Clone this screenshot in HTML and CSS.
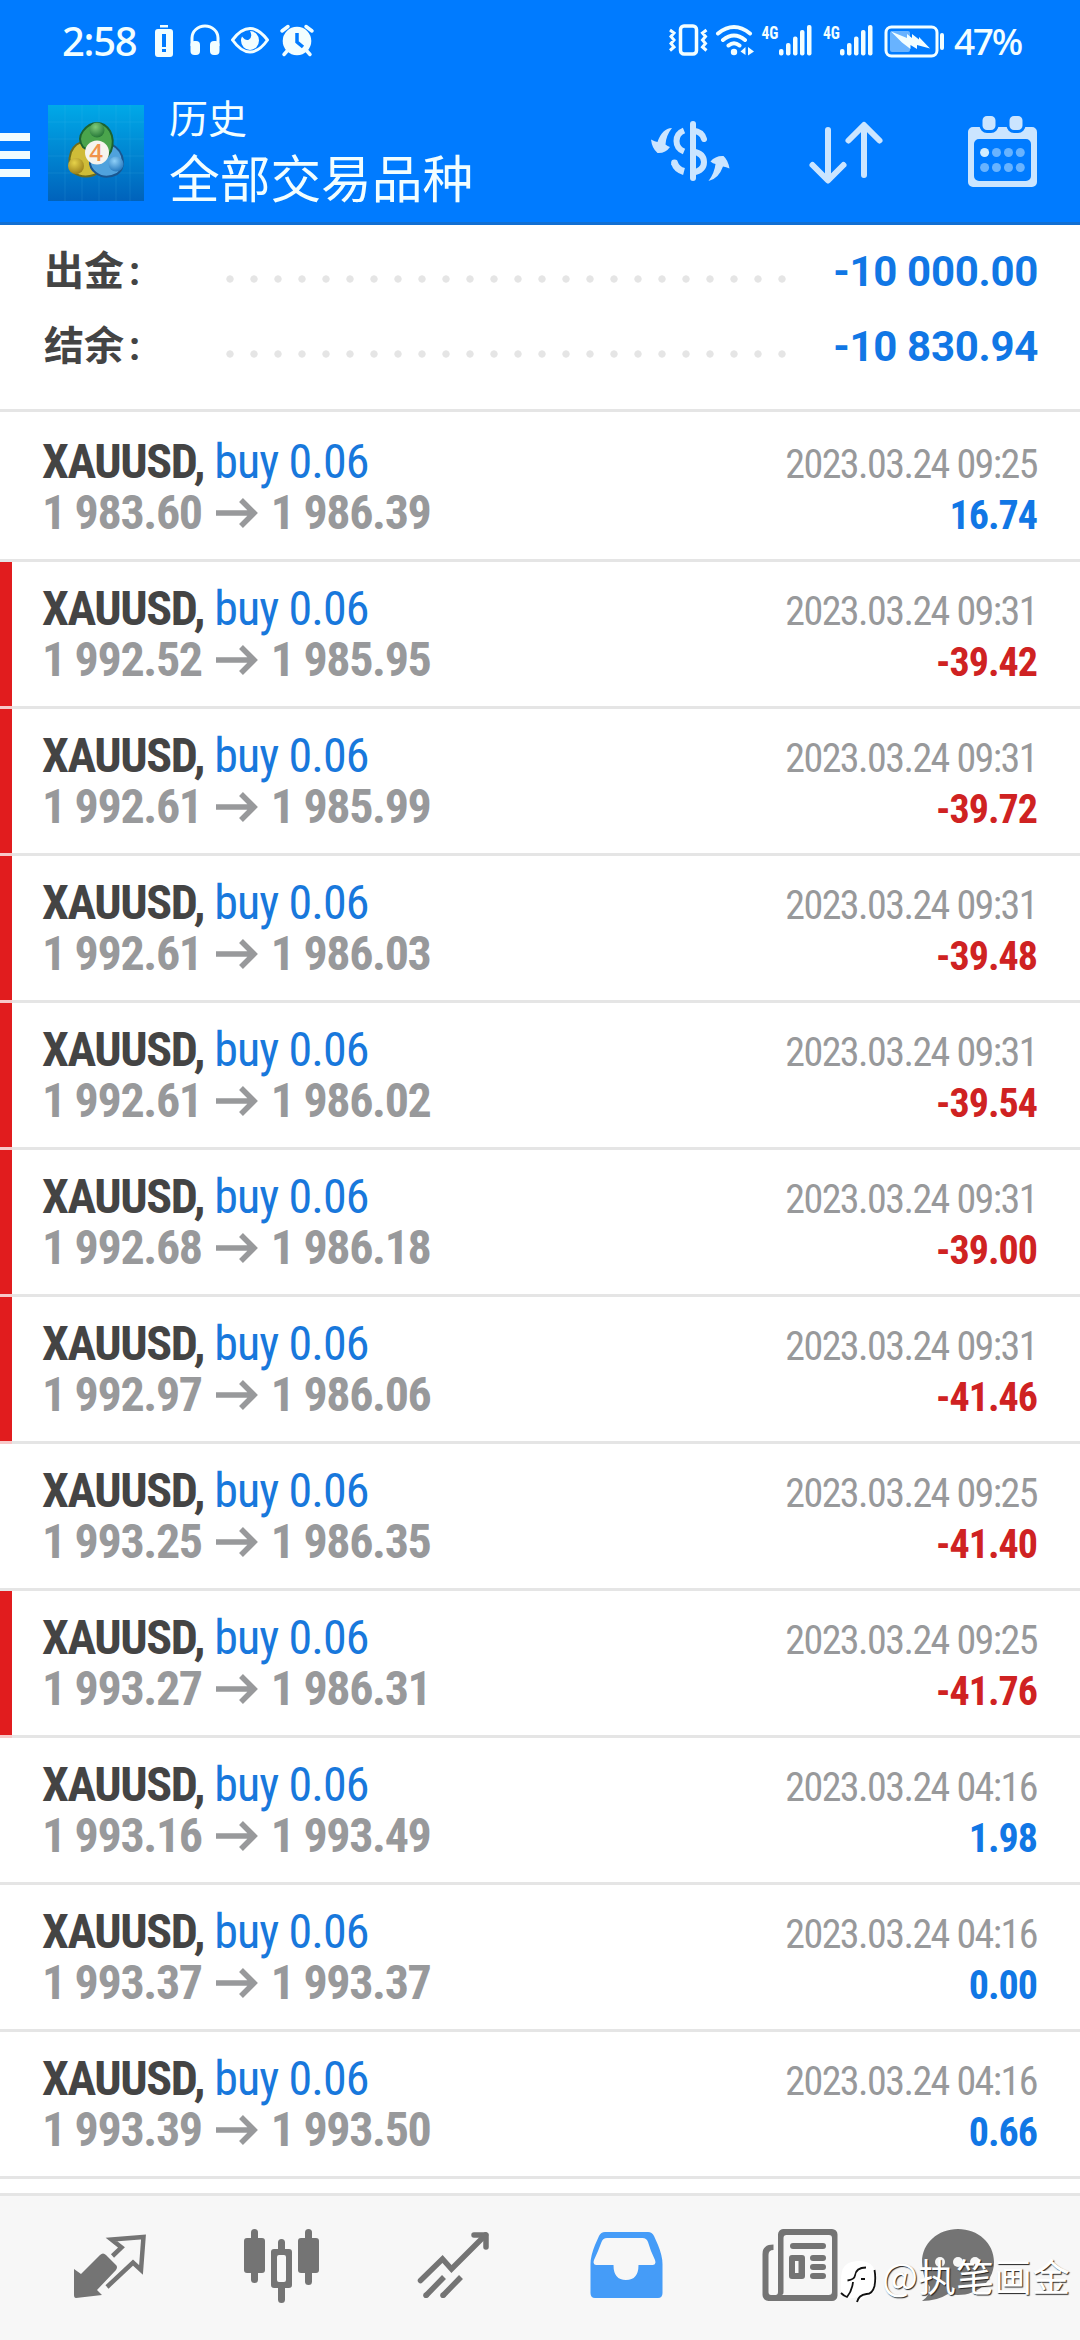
FILE: index.html
```
<!DOCTYPE html>
<html lang="zh-CN">
<head>
<meta charset="utf-8">
<title>历史</title>
<link rel="stylesheet" href="styles.css">
</head>
<body>
<header class="top">
  <div class="status">
    <span class="clock">2:58</span>
    <svg class="status-left" width="165" height="40" viewBox="152 20 165 40">
      <g fill="#f2feff">
        <path d="M160 25h8v2.500h-8zM158 29h12a3 3 0 0 1 3 3v22a3 3 0 0 1-3 3h-12a3 3 0 0 1-3-3V32a3 3 0 0 1 3-3z"/>
        <rect x="162" y="34" width="4" height="13" fill="#007bff"/><rect x="162" y="49" width="4" height="3" fill="#007bff"/>
        <path d="M192 46V38a13 12 0 0 1 26 0v8" fill="none" stroke="#f2feff" stroke-width="3"/>
        <rect x="190.500" y="41" width="9.500" height="14" rx="4"/><rect x="210" y="41" width="9.500" height="14" rx="4"/>
        <path d="M232.500 40Q241 28.500 250 28.500T267.500 40Q259 52 250 52T232.500 40z" fill="none" stroke="#f2feff" stroke-width="3" stroke-linejoin="round"/>
        <path d="M250 31a9 9.500 0 1 1-9 9.500q0-2 1-4 4 5 7 3 4-3 1-8.500z"/>
        <circle cx="297" cy="41" r="14.300"/>
        <path d="M282 31l6-4.500M312 31l-6-4.500M288 50l-4 4.500M306 50l4 4.500" fill="none" stroke="#f2feff" stroke-width="3.500" stroke-linecap="round"/>
        <path d="M297 33v9l6 5" fill="none" stroke="#007bff" stroke-width="3.500"/>
      </g>
    </svg>
    <svg class="status-right" width="286" height="40" viewBox="664 20 286 40">
      <g fill="none" stroke="#f2feff" stroke-width="3.500">
        <rect x="680.500" y="26" width="16" height="28" rx="3.500"/>
        <path d="M670 30l4 3-3 3.500 3 3.500-3 3.500 3 3.500-4 3.500M706.500 30l-4 3 3 3.500-3 3.500 3 3.500-3 3.500 4 3.500" stroke-width="3"/>
        <path d="M718 33.500q16-13 32 0M723 40q11-9 22 0M728.500 45.500q5.500-4.500 11 0" stroke-width="4" stroke-linecap="round"/>
        <rect x="886" y="27" width="51" height="29" rx="5.500" stroke-width="3"/>
      </g>
      <g fill="#f2feff">
        <circle cx="734" cy="52" r="3.200"/>
        <path d="M740.500 51.500l5-4.500v8zM748 47l6 4.500-6 4z"/>
        <rect x="779" y="49" width="4.500" height="6.500" rx="2"/><rect x="786" y="43" width="4.500" height="12.500" rx="2"/><rect x="793" y="36.500" width="4.500" height="19" rx="2"/><rect x="800" y="30" width="4.500" height="25.500" rx="2"/><rect x="807" y="25" width="4.500" height="30.500" rx="2"/>
        <rect x="840" y="49" width="4.500" height="6.500" rx="2"/><rect x="847" y="43" width="4.500" height="12.500" rx="2"/><rect x="854" y="36.500" width="4.500" height="19" rx="2"/><rect x="861" y="30" width="4.500" height="25.500" rx="2"/><rect x="868" y="25" width="4.500" height="30.500" rx="2"/>
        <rect x="890" y="31" width="20" height="21" rx="2" fill="#68b3ff"/>
        <path d="M891 31.500l16 6.500v-4l5 4v-4l7 5.500v-2.500L930 48.500 917 45v4l-6.500-4v4L902 42.500z"/>
        <rect x="940" y="33" width="4" height="17" rx="2"/>
      </g>
      <text class="net" x="761.500" y="38.500" textLength="17" lengthAdjust="spacingAndGlyphs">4G</text>
      <text class="net" x="823" y="38.500" textLength="17" lengthAdjust="spacingAndGlyphs">4G</text>
    </svg>
    <span class="percent">47%</span>
  </div>
  <div class="appbar">
    <svg class="menu" width="30" height="44" viewBox="0 133 30 44"><path d="M0 133h30v8H0zM0 151h30v8H0zM0 169h30v8H0z" fill="#effcff"/></svg>
    <svg class="logo" width="96" height="96" viewBox="0 0 96 96">
      <defs>
        <linearGradient id="bg" x1="0" y1="0" x2="0" y2="1"><stop offset="0" stop-color="#00a9e8"/><stop offset=".5" stop-color="#0086d2"/><stop offset="1" stop-color="#0062bb"/></linearGradient>
        <radialGradient id="gr" cx=".4" cy=".3" r=".8"><stop offset="0" stop-color="#7fcb7a"/><stop offset="1" stop-color="#1a6c2f"/></radialGradient>
        <radialGradient id="ye" cx=".4" cy=".3" r=".8"><stop offset="0" stop-color="#e6d24a"/><stop offset="1" stop-color="#937714"/></radialGradient>
        <radialGradient id="bl" cx=".4" cy=".3" r=".8"><stop offset="0" stop-color="#8fd0f8"/><stop offset="1" stop-color="#1a6fb8"/></radialGradient>
      </defs>
      <rect width="96" height="96" fill="url(#bg)"/>
      <path d="M0 17h96M0 34h96M0 51h96M0 68h96M17 0v96M34 0v96M51 0v96M68 0v96M82 0v96" stroke="#5cc4ef" stroke-opacity=".14"/>
      <path d="M42 38q-13-4-19 9-4 12 2 20 9 7 21 3l8-5z" fill="#cfbc38" stroke="#6c6c1d" stroke-width="2"/>
      <path d="M58 38q12 2 16 13 3 13-5 18-12 6-21-1-7-5-6-13z" fill="#4fa2dd" stroke="#1a5690" stroke-width="2"/>
      <path d="M35 42q-6-8 0-16 6-8 14-8t13 8q5 9 1 20-3 6-8 10z" fill="#4aa44c" stroke="#1b6331" stroke-width="2"/>
      <circle cx="49" cy="25" r="7.500" fill="url(#gr)"/><circle cx="28" cy="61" r="8" fill="url(#ye)"/><circle cx="68" cy="59" r="7.500" fill="url(#bl)"/>
      <circle cx="49" cy="47.500" r="12" fill="#f5f4ee"/>
      <text class="four" x="48" y="56" text-anchor="middle">4</text>
    </svg>
    <div class="titles"><div class="title-small">历史</div><div class="title-big">全部交易品种</div></div>
    <svg class="actions" width="430" height="80" viewBox="650 112 430 80">
      <g fill="none" stroke="#cbe5ff" stroke-width="6">
        <path d="M693 124v54" stroke-linecap="round"/>
        <path d="M684 130.500q-7.500 3-7.500 10.500t7.500 10.500"/>
        <path d="M674.500 163q2 6.500 9.500 8.500" stroke-width="7"/>
        <path d="M693 130.500q9 1 11 8.500" stroke-linecap="round"/>
        <path d="M693 151.500q11 2 11 10.500t-11 10.500"/>
        <path d="M828 130v49M812.500 165l15.500 15.500L843.500 165M864 175v-49M848.500 140.500L864 125l15.500 15.500" stroke-linecap="round" stroke-linejoin="round"/>
      </g>
      <circle cx="674.500" cy="163" r="3.400" fill="#cbe5ff"/>
      <g fill="#cbe5ff">
        <path d="M672 128q-10 .5-14.500 14-2.500-.5-6.500-2.500 1 9 6.500 13.500 8 .5 12.500-6-2.500-1-4.500-2.500.500-9 6.500-16.500z"/>
        <path d="M708.500 181q10-2 14.500-14.500 3 .5 6.500 2-1.500-8.500-6-12.500-8-.5-13 5.500 2.500 2 5 2.500-1 9-7 17z"/>
        <path fill-rule="evenodd" d="M973 127h59a5 5 0 0 1 5 5v50a5 5 0 0 1-5 5h-59a5 5 0 0 1-5-5v-50a5 5 0 0 1 5-5zm6 12a5 5 0 0 0-5 5v32a5 5 0 0 0 5 5h47a5 5 0 0 0 5-5v-32a5 5 0 0 0-5-5z"/>
        <rect x="981" y="114.500" width="16" height="17" rx="6" stroke="#007bff" stroke-width="3"/>
        <rect x="1008" y="114.500" width="16" height="17" rx="6" stroke="#007bff" stroke-width="3"/>
      </g>
      <g fill="#68b3ff">
        <circle cx="984.600" cy="152.500" r="4.500" fill="#d2edff"/><circle cx="996.500" cy="152.500" r="4.500"/><circle cx="1008.500" cy="152.500" r="4.500"/><circle cx="1020.300" cy="152.500" r="4.500"/>
        <circle cx="984.600" cy="167.500" r="4.500"/><circle cx="996.500" cy="167.500" r="4.500"/><circle cx="1008.500" cy="167.500" r="4.500"/><circle cx="1020.300" cy="167.500" r="4.500"/>
      </g>
    </svg>
  </div>
</header>

<section class="summary">
  <div class="sum"><span class="sum-label">出金<span class="colon">:</span></span><span class="dots"></span><span class="sum-value">-10 000.00</span></div>
  <div class="sum"><span class="sum-label">结余<span class="colon">:</span></span><span class="dots"></span><span class="sum-value">-10 830.94</span></div>
</section>

<main class="list">
  <article class="row"><div class="deal"><p class="name"><b>XAUUSD,</b> buy 0.06</p><p class="prices">1 983.60<svg class="arrow" viewBox="0 0 42 30"><path d="M0 15h38M25 2l13 13-13 13"/></svg>1 986.39</p></div><div class="result"><p class="date">2023.03.24 09:25</p><p class="amount">16.74</p></div></article>
  <article class="row sl"><div class="deal"><p class="name"><b>XAUUSD,</b> buy 0.06</p><p class="prices">1 992.52<svg class="arrow" viewBox="0 0 42 30"><path d="M0 15h38M25 2l13 13-13 13"/></svg>1 985.95</p></div><div class="result"><p class="date">2023.03.24 09:31</p><p class="amount loss">-39.42</p></div></article>
  <article class="row sl"><div class="deal"><p class="name"><b>XAUUSD,</b> buy 0.06</p><p class="prices">1 992.61<svg class="arrow" viewBox="0 0 42 30"><path d="M0 15h38M25 2l13 13-13 13"/></svg>1 985.99</p></div><div class="result"><p class="date">2023.03.24 09:31</p><p class="amount loss">-39.72</p></div></article>
  <article class="row sl"><div class="deal"><p class="name"><b>XAUUSD,</b> buy 0.06</p><p class="prices">1 992.61<svg class="arrow" viewBox="0 0 42 30"><path d="M0 15h38M25 2l13 13-13 13"/></svg>1 986.03</p></div><div class="result"><p class="date">2023.03.24 09:31</p><p class="amount loss">-39.48</p></div></article>
  <article class="row sl"><div class="deal"><p class="name"><b>XAUUSD,</b> buy 0.06</p><p class="prices">1 992.61<svg class="arrow" viewBox="0 0 42 30"><path d="M0 15h38M25 2l13 13-13 13"/></svg>1 986.02</p></div><div class="result"><p class="date">2023.03.24 09:31</p><p class="amount loss">-39.54</p></div></article>
  <article class="row sl"><div class="deal"><p class="name"><b>XAUUSD,</b> buy 0.06</p><p class="prices">1 992.68<svg class="arrow" viewBox="0 0 42 30"><path d="M0 15h38M25 2l13 13-13 13"/></svg>1 986.18</p></div><div class="result"><p class="date">2023.03.24 09:31</p><p class="amount loss">-39.00</p></div></article>
  <article class="row sl"><div class="deal"><p class="name"><b>XAUUSD,</b> buy 0.06</p><p class="prices">1 992.97<svg class="arrow" viewBox="0 0 42 30"><path d="M0 15h38M25 2l13 13-13 13"/></svg>1 986.06</p></div><div class="result"><p class="date">2023.03.24 09:31</p><p class="amount loss">-41.46</p></div></article>
  <article class="row"><div class="deal"><p class="name"><b>XAUUSD,</b> buy 0.06</p><p class="prices">1 993.25<svg class="arrow" viewBox="0 0 42 30"><path d="M0 15h38M25 2l13 13-13 13"/></svg>1 986.35</p></div><div class="result"><p class="date">2023.03.24 09:25</p><p class="amount loss">-41.40</p></div></article>
  <article class="row sl"><div class="deal"><p class="name"><b>XAUUSD,</b> buy 0.06</p><p class="prices">1 993.27<svg class="arrow" viewBox="0 0 42 30"><path d="M0 15h38M25 2l13 13-13 13"/></svg>1 986.31</p></div><div class="result"><p class="date">2023.03.24 09:25</p><p class="amount loss">-41.76</p></div></article>
  <article class="row"><div class="deal"><p class="name"><b>XAUUSD,</b> buy 0.06</p><p class="prices">1 993.16<svg class="arrow" viewBox="0 0 42 30"><path d="M0 15h38M25 2l13 13-13 13"/></svg>1 993.49</p></div><div class="result"><p class="date">2023.03.24 04:16</p><p class="amount">1.98</p></div></article>
  <article class="row"><div class="deal"><p class="name"><b>XAUUSD,</b> buy 0.06</p><p class="prices">1 993.37<svg class="arrow" viewBox="0 0 42 30"><path d="M0 15h38M25 2l13 13-13 13"/></svg>1 993.37</p></div><div class="result"><p class="date">2023.03.24 04:16</p><p class="amount">0.00</p></div></article>
  <article class="row"><div class="deal"><p class="name"><b>XAUUSD,</b> buy 0.06</p><p class="prices">1 993.39<svg class="arrow" viewBox="0 0 42 30"><path d="M0 15h38M25 2l13 13-13 13"/></svg>1 993.50</p></div><div class="result"><p class="date">2023.03.24 04:16</p><p class="amount">0.66</p></div></article>
</main>

<nav class="tabs">
  <svg class="tab" viewBox="24 2196 172 144">
    <path fill="#747474" d="M74 2269l7 5 19-19q3-3 6 0l10 10q2 2 0 5l-19 20 5 5-26 3q-2 0-2-3z"/>
    <path fill="none" stroke="#747474" stroke-width="4.500" d="M112.500 2256l9-8.500-10-8 32-2.500-2.500 33-8-7.500-26 24.500"/>
  </svg>
  <svg class="tab" viewBox="196 2196 172 144" fill="#747474">
    <rect x="244" y="2238" width="21" height="35" rx="3"/><rect x="251" y="2229" width="7" height="54" rx="3.500"/>
    <rect x="298" y="2238" width="21" height="35" rx="3"/><rect x="305" y="2229" width="7" height="56" rx="3.500"/>
    <path fill-rule="evenodd" d="M278 2249v-6.500a3.500 3.500 0 0 1 7 0v6.500h4a3 3 0 0 1 3 3v33a3 3 0 0 1-3 3h-4v11.500a3.500 3.500 0 0 1-7 0V2288h-4a3 3 0 0 1-3-3v-33a3 3 0 0 1 3-3zm1 6q-2 0-2 2v23q0 2 2 2h5q2 0 2-2v-23q0-2-2-2z"/>
  </svg>
  <svg class="tab" viewBox="368 2196 172 144" fill="none" stroke="#747474" stroke-width="5.500">
    <path stroke-linecap="round" d="M420.500 2280.500l22-21.500 9 10 34-34"/><path stroke-linecap="round" stroke-linejoin="round" d="M474 2235h12v12"/>
    <path d="M426 2295.500l18-18.500M443 2295.500l18-18.500"/><g fill="#747474" stroke="none"><circle cx="426" cy="2295.300" r="2.800"/><circle cx="443" cy="2295.300" r="2.800"/></g>
  </svg>
  <svg class="tab" viewBox="540 2196 172 144">
    <path fill="#459cf8" fill-rule="evenodd" d="M605 2232h43q4 0 6 4l4 9q4.500 11 4.500 19v29q0 5-4.500 5h-63q-4.500 0-4.500-5v-29q0-8 4.500-19l4-9q2-4 6-4zm2 6q-4 0-5.500 4l-3.500 9-4 9q-1.500 5 2 5h17.500q0 15 12.500 15t12.500-15H653q3.500 0 2-5l-4-9-3-9q-1.500-4-5.500-4z"/>
  </svg>
  <svg class="tab" viewBox="712 2196 172 144" fill="#747474">
    <path fill-rule="evenodd" d="M783 2229h49a5.500 5.500 0 0 1 5.500 5.500v61a5.500 5.500 0 0 1-5.500 5.500h-63.500a6 6 0 0 1-6-6v-41q0-9.500 11-9.500v5.500q-5 0-5 5v37q0 3 2.500 3h4.500q2.500 0 2.500-3v-57.500a5.500 5.500 0 0 1 5-5.500zm3.500 6q-3 0-3 3v54q0 3-2 3h47q3.500 0 3.500-3v-54q0-3-3-3z"/>
    <rect x="790" y="2243" width="36" height="6" rx="3"/><rect x="810" y="2255" width="16" height="6" rx="3"/><rect x="810" y="2264" width="16" height="6" rx="3"/><rect x="810" y="2273" width="16" height="6" rx="3"/>
    <path fill-rule="evenodd" d="M792 2255h10q3 0 3 3v18q0 3-3 3h-10q-3 0-3-3v-18q0-3 3-3zm3 6v12h3.500v-12z"/>
  </svg>
  <svg class="tab last" viewBox="884 2196 172 144">
    <path fill="#747474" d="M958 2229c20 0 36 14 36 33s-16 33-36 33q-5 0-10-1-11 7-26 7 8-5 8-14-8-10-8-25c0-19 16-33 36-33z"/>
    <circle cx="940" cy="2262" r="5" fill="#f7f7f7"/><circle cx="958" cy="2262" r="5" fill="#f7f7f7"/><circle cx="975" cy="2262" r="5" fill="#f7f7f7"/>
  </svg>
</nav>
<div class="mark">
  <svg width="40" height="46" viewBox="839 2259 40 46">
    <path fill="#fff" d="M842 2271q3-10 17-10 16 0 16 14v12q0 8-8 9l-10 7 0-6q-12 4-16-5-1-11 1-21z"/>
    <path fill="none" stroke="#111" stroke-width="1.800" d="M847.500 2280.500q7-1 7.500-5 1-8 11-8M861 2279h4M853 2282q-1 9-6 15-3-1-6-4M874.500 2270q1.500 8 0 16-2 8-8 8-8 1-9.500 8"/>
  </svg><span>@执笔画金</span>
</div>
</body>
</html>
```
FILE: styles.css
```
* { box-sizing: border-box; }
body { margin: 0; width: 1080px; height: 2340px; overflow: hidden; position: relative; display: flex; flex-direction: column; background: #fff; font-family: "Roboto Condensed", Roboto, "Noto Sans CJK SC", sans-serif; }
p { margin: 0; }
svg { display: block; flex: none; }

.top { height: 225px; background: #007bff; border-bottom: 3px solid #126fd2; color: #f2feff; display: flex; flex-direction: column; }
.status { height: 80px; padding: 20px 58px 0 62px; display: flex; }
.clock { width: 90px; font: 500 40px/40px "Noto Sans", sans-serif; letter-spacing: -1.300px; padding-top: 1px; white-space: nowrap; }
.status-right { margin-left: auto; }
.net { font: 700 19px "Roboto Condensed", sans-serif; fill: #f2feff; }
.percent { width: 72px; padding: 1px 0 0 4px; font: 500 37px/40px "Noto Sans", sans-serif; letter-spacing: -2.300px; white-space: nowrap; }

.appbar { height: 142px; display: flex; align-items: flex-start; }
.menu { margin-top: 53px; }
.logo { margin: 25px 0 0 18px; }
.four { font: 600 24px "Open Sans", sans-serif; fill: #f0934a; }
.titles { margin: 16px 0 0 25px; font-family: "Noto Sans CJK SC", sans-serif; font-weight: 400; white-space: nowrap; }
.title-small { font-size: 39px; line-height: 40px; }
.title-big { font-size: 50.700px; line-height: 50px; margin-top: 15px; }
.actions { margin: 32px 0 0 auto; }

.summary { height: 187px; padding: 9px 42px 0 44px; border-bottom: 3px solid #e5e5e5; }
.sum { height: 75px; display: flex; align-items: center; line-height: 75px; }
.sum-label { width: 174px; font: 700 40px/75px Roboto, "Noto Sans CJK SC", sans-serif; color: #444; }
.colon { margin-left: 5px; }
.dots { width: 576px; height: 8px; margin-top: 15px; background: radial-gradient(circle, #e5e5e5 3.300px, transparent 4px) 0 0 / 24px 8px; }
.sum-value { margin-left: auto; font: 700 42px/75px Roboto, sans-serif; letter-spacing: -.300px; color: #1177e5; white-space: nowrap; }

.list { padding-top: 3px; }
.row { position: relative; height: 147px; border-bottom: 3px solid #e5e5e5; padding: 0 42px; display: flex; justify-content: space-between; white-space: nowrap; line-height: 51px; }
.sl::before { content: ""; position: absolute; left: 0; top: 0; width: 12px; height: 147px; background: linear-gradient(#e11c1e 144px, #f7c9c9 144px); }
.deal { padding-top: 21px; }
.name { font-size: 48px; letter-spacing: -.900px; color: #1878dc; }
.name b { color: #444; letter-spacing: -1.400px; }
.prices { display: flex; align-items: center; font-size: 48px; font-weight: 700; letter-spacing: -1.350px; color: #98999b; }
.arrow { width: 42px; height: 30px; margin: 0 13px 0 14px; fill: none; stroke: #98999b; stroke-width: 5.500; }
.result { padding: 24px 1px 0 0; text-align: right; font-size: 40px; }
.date { color: #98999b; letter-spacing: -1.550px; }
.amount { font-weight: 700; color: #1177e5; letter-spacing: -1px; }
.amount.loss { color: #cf2222; }

.tabs { margin-top: auto; height: 147px; border-top: 3px solid #e5e5e5; background: #f7f7f7; display: flex; padding-left: 24px; }
.tab { width: 172px; height: 144px; }
.mark { position: absolute; left: 839px; top: 2259px; display: flex; color: #fff; }
.mark span { margin: -4px 0 0 3px; font: 400 38px/40px "Noto Sans CJK SC", sans-serif; text-shadow: 1px 1px 1px #222; white-space: nowrap; }
```
